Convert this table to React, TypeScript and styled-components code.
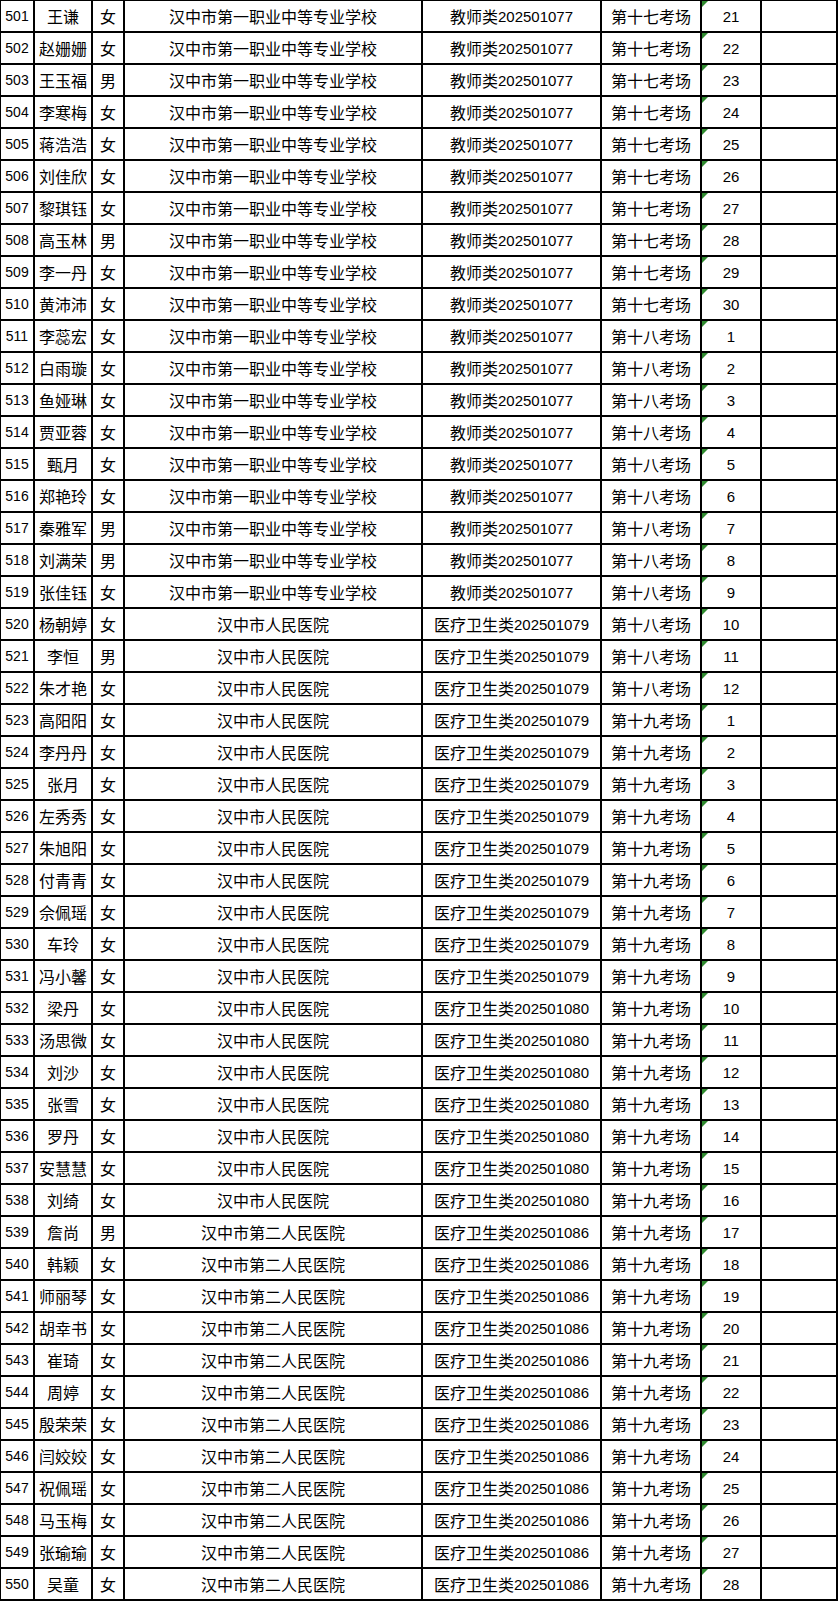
import React from "react";
import styled, { createGlobalStyle } from "styled-components";

const GlobalStyle = createGlobalStyle`
  html, body { margin: 0; padding: 0; background: #ffffff; }
  body { font-family: "Liberation Sans", "Noto Sans CJK SC", sans-serif; color: #000; }
`;

const Sheet = styled.div`
  width: 838px;
  box-sizing: border-box;
  border-top: 1px solid #000;
  border-left: 1px solid #000;
  display: flex;
  flex-direction: column;
`;

const Row = styled.div`
  display: grid;
  grid-template-columns: 34px 58px 32px 298px 179px 100px 60px 76px;
  height: 32px;
  box-sizing: border-box;
  border-bottom: 2px solid #000;
`;

const Cell = styled.div<{ $mono?: boolean }>`
  box-sizing: border-box;
  border-right: 2px solid #000;
  display: flex;
  align-items: center;
  justify-content: center;
  font-family: "Noto Sans CJK SC", sans-serif;
  font-size: 16px;
  line-height: 1;
  white-space: nowrap;
  overflow: hidden;
  position: relative;
`;

const IndexCell = styled(Cell)`
  font-family: "Liberation Sans", sans-serif;
  font-size: 14px;
`;

const Digits = styled.span`
  font-family: "Liberation Sans", sans-serif;
  font-size: 15px;
`;

const SeatCell = styled(Cell)`
  font-family: "Liberation Sans", sans-serif;
  font-size: 15px;
  &::before {
    content: "";
    position: absolute;
    left: 0;
    top: 0;
    width: 0;
    height: 0;
    border-top: 6px solid #2f8a2f;
    border-right: 6px solid transparent;
  }
`;

type Rec = [number, string, string, string, string, string, string, number];

const S1 = "汉中市第一职业中等专业学校";
const S2 = "汉中市人民医院";
const S3 = "汉中市第二人民医院";
const T = "教师类";
const M = "医疗卫生类";
const R17 = "第十七考场";
const R18 = "第十八考场";
const R19 = "第十九考场";

const rows: Rec[] = [
  [501, "王谦", "女", S1, T, "202501077", R17, 21],
  [502, "赵姗姗", "女", S1, T, "202501077", R17, 22],
  [503, "王玉福", "男", S1, T, "202501077", R17, 23],
  [504, "李寒梅", "女", S1, T, "202501077", R17, 24],
  [505, "蒋浩浩", "女", S1, T, "202501077", R17, 25],
  [506, "刘佳欣", "女", S1, T, "202501077", R17, 26],
  [507, "黎琪钰", "女", S1, T, "202501077", R17, 27],
  [508, "高玉林", "男", S1, T, "202501077", R17, 28],
  [509, "李一丹", "女", S1, T, "202501077", R17, 29],
  [510, "黄沛沛", "女", S1, T, "202501077", R17, 30],
  [511, "李蕊宏", "女", S1, T, "202501077", R18, 1],
  [512, "白雨璇", "女", S1, T, "202501077", R18, 2],
  [513, "鱼娅琳", "女", S1, T, "202501077", R18, 3],
  [514, "贾亚蓉", "女", S1, T, "202501077", R18, 4],
  [515, "甄月", "女", S1, T, "202501077", R18, 5],
  [516, "郑艳玲", "女", S1, T, "202501077", R18, 6],
  [517, "秦雅军", "男", S1, T, "202501077", R18, 7],
  [518, "刘满荣", "男", S1, T, "202501077", R18, 8],
  [519, "张佳钰", "女", S1, T, "202501077", R18, 9],
  [520, "杨朝婷", "女", S2, M, "202501079", R18, 10],
  [521, "李恒", "男", S2, M, "202501079", R18, 11],
  [522, "朱才艳", "女", S2, M, "202501079", R18, 12],
  [523, "高阳阳", "女", S2, M, "202501079", R19, 1],
  [524, "李丹丹", "女", S2, M, "202501079", R19, 2],
  [525, "张月", "女", S2, M, "202501079", R19, 3],
  [526, "左秀秀", "女", S2, M, "202501079", R19, 4],
  [527, "朱旭阳", "女", S2, M, "202501079", R19, 5],
  [528, "付青青", "女", S2, M, "202501079", R19, 6],
  [529, "佘佩瑶", "女", S2, M, "202501079", R19, 7],
  [530, "车玲", "女", S2, M, "202501079", R19, 8],
  [531, "冯小馨", "女", S2, M, "202501079", R19, 9],
  [532, "梁丹", "女", S2, M, "202501080", R19, 10],
  [533, "汤思微", "女", S2, M, "202501080", R19, 11],
  [534, "刘沙", "女", S2, M, "202501080", R19, 12],
  [535, "张雪", "女", S2, M, "202501080", R19, 13],
  [536, "罗丹", "女", S2, M, "202501080", R19, 14],
  [537, "安慧慧", "女", S2, M, "202501080", R19, 15],
  [538, "刘绮", "女", S2, M, "202501080", R19, 16],
  [539, "詹尚", "男", S3, M, "202501086", R19, 17],
  [540, "韩颖", "女", S3, M, "202501086", R19, 18],
  [541, "师丽琴", "女", S3, M, "202501086", R19, 19],
  [542, "胡幸书", "女", S3, M, "202501086", R19, 20],
  [543, "崔琦", "女", S3, M, "202501086", R19, 21],
  [544, "周婷", "女", S3, M, "202501086", R19, 22],
  [545, "殷荣荣", "女", S3, M, "202501086", R19, 23],
  [546, "闫姣姣", "女", S3, M, "202501086", R19, 24],
  [547, "祝佩瑶", "女", S3, M, "202501086", R19, 25],
  [548, "马玉梅", "女", S3, M, "202501086", R19, 26],
  [549, "张瑜瑜", "女", S3, M, "202501086", R19, 27],
  [550, "吴童", "女", S3, M, "202501086", R19, 28],
];

export default function App() {
  return (
    <>
      <GlobalStyle />
      <Sheet>
        {rows.map(([no, name, sex, unit, cat, code, room, seat]) => (
          <Row key={no}>
            <IndexCell>{no}</IndexCell>
            <Cell>{name}</Cell>
            <Cell>{sex}</Cell>
            <Cell>{unit}</Cell>
            <Cell>
              {cat}
              <Digits>{code}</Digits>
            </Cell>
            <Cell>{room}</Cell>
            <SeatCell>{seat}</SeatCell>
            <Cell />
          </Row>
        ))}
      </Sheet>
    </>
  );
}
